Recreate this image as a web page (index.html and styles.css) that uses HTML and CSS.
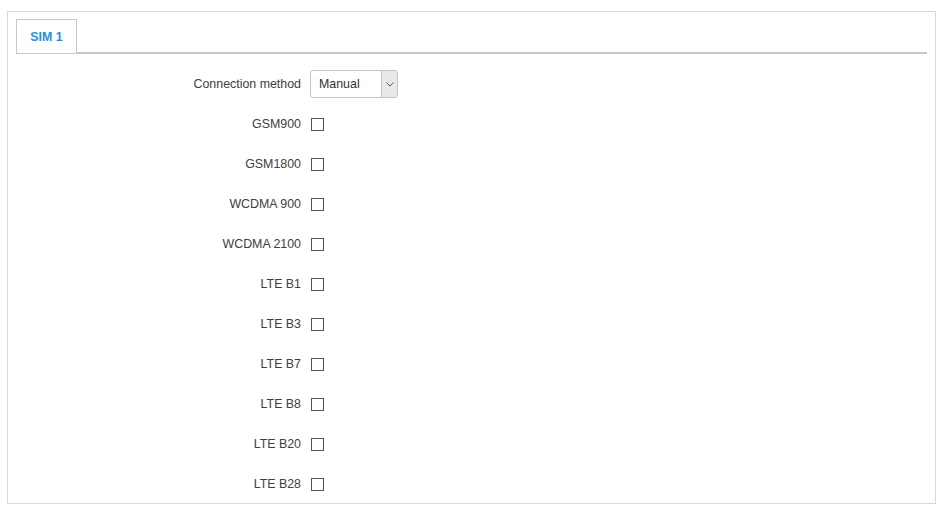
FILE: index.html
```html
<!DOCTYPE html>
<html lang="en">
<head>
    <meta charset="UTF-8">
    <title>SIM 1 bands</title>
    <link rel="stylesheet" href="styles.css">
</head>
<body>

<div class="panel">
    <!-- Tabs -->
    <div class="tabs">
        <div class="tab active">SIM 1</div>
    </div>

    <!-- Band settings -->
    <div class="form">
        <div class="row">
            <label class="label">Connection method</label>
            <div class="select">
                <span class="select-value">Manual</span>
                <span class="select-arrow">
                    <svg width="8" height="5" viewBox="0 0 8 5"><path d="M0.5 0.5 L4 4 L7.5 0.5" fill="none" stroke="#555" stroke-width="1"/></svg>
                </span>
            </div>
        </div>
        <div class="row"><label class="label">GSM900</label><span class="checkbox"></span></div>
        <div class="row"><label class="label">GSM1800</label><span class="checkbox"></span></div>
        <div class="row"><label class="label">WCDMA 900</label><span class="checkbox"></span></div>
        <div class="row"><label class="label">WCDMA 2100</label><span class="checkbox"></span></div>
        <div class="row"><label class="label">LTE B1</label><span class="checkbox"></span></div>
        <div class="row"><label class="label">LTE B3</label><span class="checkbox"></span></div>
        <div class="row"><label class="label">LTE B7</label><span class="checkbox"></span></div>
        <div class="row"><label class="label">LTE B8</label><span class="checkbox"></span></div>
        <div class="row"><label class="label">LTE B20</label><span class="checkbox"></span></div>
        <div class="row"><label class="label">LTE B28</label><span class="checkbox"></span></div>
    </div>
</div>

</body>
</html>
```

FILE: styles.css
```css
body {
    font-family: 'Liberation Sans', Arial, sans-serif;
    font-size: 12.4px;
    color: #404040;
    background: #fff;
    margin: 0;
    padding: 11px 8px 0 7px;
}

.panel {
    border: 1px solid #d9d9d9;
    padding: 7px 8px 0 8px;
    box-sizing: border-box;
    height: 493px;
}

.tabs {
    display: flex;
    border-bottom: 2px solid #c8c8c8;
    height: 33px;
}

.tab {
    height: 34px;
    padding: 0 13px;
    box-sizing: border-box;
    border: 1px solid #c8c8c8;
    border-bottom: none;
    background: #fff;
    line-height: 34px;
    font-weight: bold;
    color: #2b8ddb;
    margin-bottom: -2px;
    min-width: 61px;
    text-align: center;
}

.form {
    margin-top: 16px;
    display: flex;
    flex-direction: column;
    gap: 12px;
}

.row {
    display: flex;
    align-items: center;
    height: 28px;
    line-height: 28px;
}

.label {
    width: 285px;
    text-align: right;
    padding-right: 9px;
}

.select {
    display: flex;
    align-items: stretch;
    width: 88px;
    height: 28px;
    box-sizing: border-box;
    border: 1px solid #c4c4c4;
    border-radius: 3px;
    overflow: hidden;
}

.select-value {
    flex: 1;
    padding-left: 8px;
    line-height: 26px;
    color: #333;
}

.select-arrow {
    width: 15px;
    background: #e8e8e8;
    border-left: 1px solid #c4c4c4;
    display: flex;
    align-items: center;
    justify-content: center;
}

.checkbox {
    width: 13px;
    height: 13px;
    box-sizing: border-box;
    border: 1px solid #555;
    margin-left: 1px;
    background: #fff;
}
```
